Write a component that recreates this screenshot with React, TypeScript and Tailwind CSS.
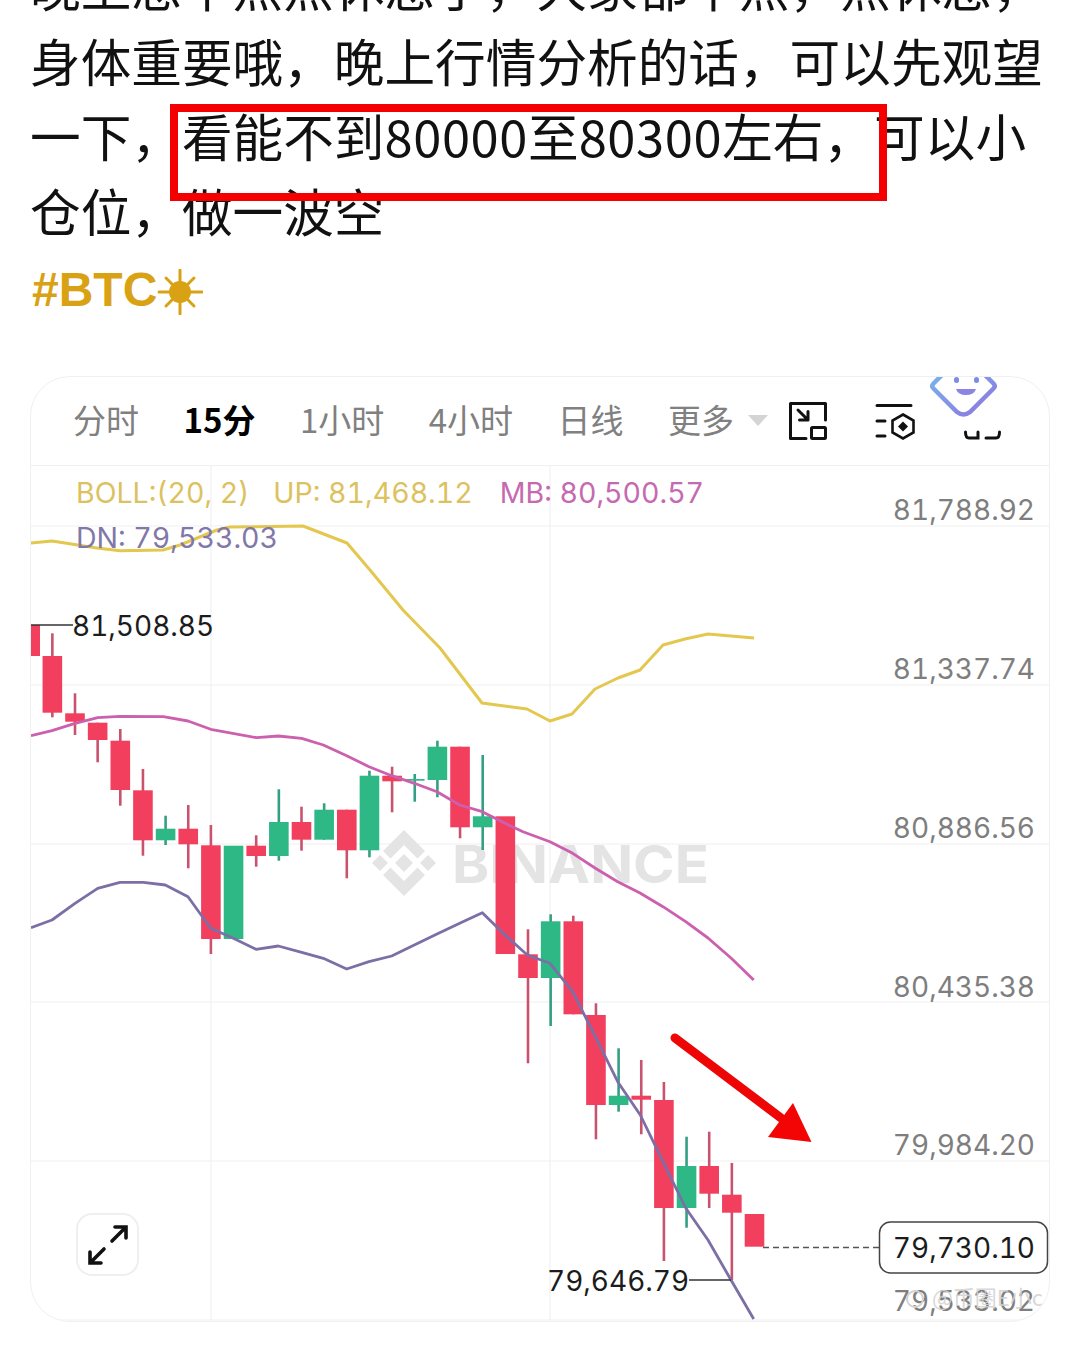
import React from "react";

type Candle = [number, "r" | "g", number, number, number?, number?];

// index, colour, body top, body bottom, wick top, wick bottom
const candles: Candle[] = [
  [1, "r", 656, 712.7, 633.3, 717.3],
  [2, "r", 713.3, 721.7, 693.3, 735],
  [3, "r", 722.7, 740, 722.7, 762.3],
  [4, "r", 740.7, 790, 729, 805.7],
  [5, "r", 790.3, 840.3, 769, 855.7],
  [6, "g", 828.7, 840.3, 815.7, 845],
  [7, "r", 828.7, 844.3, 805, 868.3],
  [8, "r", 845.3, 939, 825, 954],
  [9, "g", 845.7, 939],
  [10, "r", 845.7, 856, 835.3, 866.7],
  [11, "g", 822, 856, 789.3, 860.7],
  [12, "r", 822, 839.7, 806.7, 850.7],
  [13, "g", 809.7, 839.7, 803.3, 839.7],
  [14, "r", 809.7, 850.3, 809.7, 878.3],
  [15, "g", 775.7, 850.3, 770.7, 857.3],
  [16, "r", 775.7, 781.3, 766.7, 812.3],
  [17, "g", 779, 780.7, 774, 801.7],
  [18, "g", 746.7, 780, 740.7, 797.3],
  [19, "r", 746.7, 827.3, 746.7, 838.3],
  [20, "g", 816.3, 827.3, 755, 850],
  [21, "r", 816.3, 954],
  [22, "r", 954.3, 978, 929.3, 1063.3],
  [23, "g", 921.3, 978, 914.3, 1026],
  [24, "r", 921.3, 1014.3, 915.7, 1014.3],
  [25, "r", 1015, 1105, 1003.3, 1139.3],
  [26, "g", 1095.7, 1105, 1048.3, 1111.7],
  [27, "r", 1095.7, 1099.7, 1060, 1134.3],
  [28, "r", 1100, 1208, 1082, 1261],
  [29, "g", 1166, 1208, 1136.7, 1227.7],
  [30, "r", 1166, 1193.7, 1131.7, 1208],
  [31, "r", 1194.7, 1212.7, 1163, 1280],
  [32, "r", 1214, 1246.7],
];

const upLine =
  "31,543 52,541 97,548 120,550.7 163,550 180,545 217,530 230,527 303,526 347,543 370,570 403,610 440,648 482,703 527,709 550,721 572,714 595,689 618,678 640,670 663,645 685,639 708,634 731,636 754,638";
const mbLine =
  "31,735.7 52,730.7 75,723.3 97.7,717.7 120,716.3 163.3,716.7 188,721 210.7,729.3 256.7,737.7 278.3,736 301.7,738.3 323.3,745 346.7,755.7 369,766.7 391.7,775.7 414.3,783.3 437,791.7 459.7,805 482.3,811.7 505,823.3 523,831.7 550,841.7 572.7,853.3 595,868 617.7,881.7 640,893 663,906.7 685.7,921.7 708,938 731,958 753.7,980";
const dnLine =
  "31,927.7 52,920 75,903.3 97.7,888.3 120,882.3 143.3,882.3 165.3,885 188,896.7 210.7,928.3 233.3,938.3 256,949.3 278.3,946 301.7,952.3 323.3,958.3 346.7,969 369,961.7 391.7,956 414.3,945 437,934 459.7,923.3 482.3,912.7 505,935 527.3,955 550,963.3 572.7,991.7 595.3,1036.7 617.7,1081.7 640.3,1115 663,1161.7 685.7,1208 708,1240 731,1280 753.7,1319";

const gridY = [526, 685, 844, 1002, 1161, 1320];
const axis: [string, number][] = [
  ["81,788.92", 520],
  ["81,337.74", 679],
  ["80,886.56", 838],
  ["80,435.38", 997],
  ["79,984.20", 1155],
  ["79,533.02", 1311],
];

function Sun() {
  return (
    <svg width="46" height="46" viewBox="0 0 46 46" className="mt-[4px]">
      <g stroke="#d9a214" strokeWidth="3" strokeLinecap="round">
        <line x1="23" y1="1" x2="23" y2="45" />
        <line x1="2" y1="23" x2="45" y2="23" />
        <line x1="9" y1="9" x2="37" y2="37" />
        <line x1="37" y1="9" x2="9" y2="37" />
      </g>
      <circle cx="23" cy="23" r="11" fill="#d9a214" />
    </svg>
  );
}

function Tab({ label, active }: { label: string; active?: boolean }) {
  return <span className={active ? "font-bold text-black" : "text-[#808080]"}>{label}</span>;
}

function Icons() {
  return (
    <svg width="262" height="89" viewBox="788 377 262 89" className="absolute right-0 top-0">
      <defs>
        <linearGradient id="face" x1="0" y1="0" x2="1" y2="1">
          <stop offset="0" stopColor="#76b4ec" />
          <stop offset="1" stopColor="#8f74e0" />
        </linearGradient>
      </defs>
      {/* picture in picture */}
      <g fill="none" stroke="#111" strokeWidth="3" strokeLinecap="round" strokeLinejoin="round">
        <path d="M807 438.5H791.5V403.5H826.5V420" />
        <rect x="812.5" y="427.5" width="14" height="11" rx="1" />
        <path d="M799 410L809 420M809 411.5V420H800.5" />
      </g>
      {/* chart settings */}
      <g fill="none" stroke="#111" strokeWidth="3" strokeLinecap="round">
        <path d="M878 405.5H912M878 421H886M878 436H886" />
        <path d="M904 414.5L914.5 420.5V432.5L904 438.5L893.5 432.5V420.5Z" strokeWidth="2.6" />
      </g>
      <path d="M904 421.5L909 426.5L904 431.5L899 426.5Z" fill="#111" />
      {/* mascot */}
      <path
        d="M946 372L934.5 383.5Q932 386 934.5 388.5L958 412Q964.5 417 971 412L994.5 388.5Q997 386 994.5 383.5L983 372"
        fill="none"
        stroke="url(#face)"
        strokeWidth="4.5"
        strokeLinecap="round"
      />
      <rect x="955" y="377" width="5" height="6" rx="2.5" fill="#7d8de6" />
      <rect x="975" y="377" width="5" height="6" rx="2.5" fill="#7d8de6" />
      <path d="M957 389H977Q975 395 967 395Q959 395 957 389Z" fill="#8a84e4" />
      <path
        d="M966.5 432Q966.5 438 970 438H979V432M987 438H997Q1000.5 438 1000.5 432"
        fill="none"
        stroke="#111"
        strokeWidth="3"
        strokeLinecap="round"
      />
    </svg>
  );
}

function Chart() {
  return (
    <svg viewBox="31 466 1018 855" className="absolute inset-0 h-[855px] w-[1018px]">
      {gridY.map((y) => (
        <line key={y} x1="31" x2="1049" y1={y} y2={y} stroke="#efefef" strokeWidth="1.2" />
      ))}
      <line x1="211" x2="211" y1="466" y2="1320" stroke="#f1f1f1" strokeWidth="1.2" />
      <line x1="550" x2="550" y1="466" y2="1320" stroke="#f1f1f1" strokeWidth="1.2" />

      {/* watermark */}
      <g fill="#e4e4e4" transform="translate(404 863)">
        <path d="M0 -33L21 -12L13.5 -4.5L0 -18L-13.5 -4.5L-21 -12Z" />
        <path d="M0 33L21 12L13.5 4.5L0 18L-13.5 4.5L-21 12Z" />
        <path d="M0 -9L9 0L0 9L-9 0Z" />
        <path d="M-24 -8L-16 0L-24 8L-32 0Z" />
        <path d="M24 -8L32 0L24 8L16 0Z" />
      </g>
      <text x="452" y="883" fontFamily="Inter, sans-serif" fontWeight="700" fontSize="52" fill="#e4e4e4" textLength="257" lengthAdjust="spacingAndGlyphs">
        BINANCE
      </text>

      {/* candles */}
      <rect x="31" y="625" width="9" height="31" fill="#f23f5d" />
      {candles.map(([i, c, top, bottom, wickTop, wickBottom]) => {
        const x = 29.7 + 22.65 * i;
        return (
          <g key={i}>
            {wickTop !== undefined && (
              <line x1={x} x2={x} y1={wickTop} y2={wickBottom} stroke={c === "r" ? "#c9526e" : "#349f84"} strokeWidth="2.6" />
            )}
            <rect x={x - 9.8} y={top} width="19.6" height={bottom - top} fill={c === "r" ? "#f23f5d" : "#2eb886"} />
          </g>
        );
      })}

      {/* BOLL lines */}
      <polyline points={upLine} fill="none" stroke="#e3c74f" strokeWidth="3" strokeLinejoin="round" />
      <polyline points={mbLine} fill="none" stroke="#cc5fae" strokeWidth="2.8" strokeLinejoin="round" />
      <polyline points={dnLine} fill="none" stroke="#7c6fa6" strokeWidth="2.8" strokeLinejoin="round" />

      {/* price axis */}
      <g fontFamily="Inter, sans-serif" fontSize="28" fill="#7e7e7e" textAnchor="end" className="tabular-nums">
        {axis.map(([label, y]) => (
          <text key={label} x="1035" y={y}>
            {label}
          </text>
        ))}
      </g>

      {/* high, low and last price */}
      <g fontFamily="Inter, sans-serif" fontSize="28" fill="#1c1c1c" className="tabular-nums">
        <text x="72" y="636">81,508.85</text>
        <text x="547" y="1291">79,646.79</text>
      </g>
      <line x1="31" x2="73" y1="625" y2="625" stroke="#333" strokeWidth="1.5" />
      <line x1="689" x2="731" y1="1280" y2="1280" stroke="#333" strokeWidth="1.5" />
      <line x1="763" x2="879" y1="1247.5" y2="1247.5" stroke="#555" strokeWidth="1.6" strokeDasharray="6 4" />
      <rect x="879.5" y="1222" width="168" height="51" rx="11" fill="#fff" stroke="#444" strokeWidth="1.5" />
      <text x="1035" y="1258" fontFamily="Inter, sans-serif" fontSize="28" fill="#1c1c1c" textAnchor="end" className="tabular-nums">
        79,730.10
      </text>

      {/* arrow drawn on top of the screenshot */}
      <path d="M675 1038L781 1118" stroke="#ee0505" strokeWidth="9" strokeLinecap="round" />
      <path d="M793 1103L811.5 1142L768 1137Z" fill="#f40505" />

      {/* site watermark */}
      <circle cx="915" cy="1299" r="8" fill="none" stroke="#d2d2d2" strokeWidth="2" />
      <text x="932" y="1306" fontFamily="'Noto Sans CJK SC', sans-serif" fontSize="22" fill="#d2d2d2" opacity="0.85">
        @币圈E小c
      </text>
    </svg>
  );
}

export default function App() {
  return (
    <div className="h-[1354px] w-[1080px] overflow-hidden bg-white font-['Noto_Sans_CJK_SC',sans-serif]">
      <div className="relative mt-[-52px] pl-[30px] text-[50.65px] leading-[75px] text-[#111] whitespace-nowrap">
        <p>晚上想早点点休息了，大家都早点，点休息，</p>
        <p>身体重要哦，晚上行情分析的话，可以先观望</p>
        <p className="flex">
          <span>一下，看能不到</span>
          <span className="tracking-[0.6px]">80000</span>
          <span>至</span>
          <span className="tracking-[0.6px]">80300</span>
          <span>左右，可以小</span>
        </p>
        <p>仓位，做一波空</p>
        <div className="absolute left-[170px] top-[156px] h-[97px] w-[717px] border-[8px] border-[#f40000]" />
      </div>

      <div className="mt-[17px] flex h-[50px] items-center pl-[32px] font-['Liberation_Sans',sans-serif] text-[48px] font-bold leading-none text-[#d9a214]">
        #BTC
        <Sun />
      </div>

      <div className="relative ml-[30px] mt-[61px] flex h-[946px] w-[1020px] flex-col overflow-hidden rounded-[40px] border border-[#f0f0f0] bg-white">
        <div className="relative flex h-[89px] shrink-0 items-center gap-[44.5px] border-b border-[#f0f0f0] pb-[2px] pl-[42px] text-[33px]">
          <Tab label="分时" />
          <Tab label="15分" active />
          <Tab label="1小时" />
          <Tab label="4小时" />
          <Tab label="日线" />
          <span className="flex items-center text-[#808080]">
            更多
            <span className="ml-[14px] h-0 w-0 border-x-[10px] border-t-[11px] border-x-transparent border-t-[#d4d4d4]" />
          </span>
          <Icons />
        </div>

        <div className="relative flex-1">
          <Chart />
          <div className="absolute left-[45px] top-[4px] flex w-[660px] flex-wrap gap-x-[24px] font-['Inter',sans-serif] text-[28.5px] leading-[45px] tabular-nums">
            <span className="text-[#dcc25f]">BOLL:(20, 2)</span>
            <span className="text-[#dcc25f]">UP: 81,468.12</span>
            <span className="ml-[3px] text-[#c56ab0]">MB: 80,500.57</span>
            <span className="text-[#7f78a8]">DN: 79,533.03</span>
          </div>
          <div className="absolute left-[45px] top-[747px] flex h-[63px] w-[63px] items-center justify-center rounded-[16px] border-2 border-[#efefef] bg-white">
            <svg width="46" height="46" viewBox="0 0 46 46" fill="none" stroke="#111" strokeWidth="3.6" strokeLinecap="round">
              <path d="M27 19L40 6M30 5H41V16" />
              <path d="M19 27L6 40M16 41H5V30" />
            </svg>
          </div>
        </div>
      </div>
    </div>
  );
}
